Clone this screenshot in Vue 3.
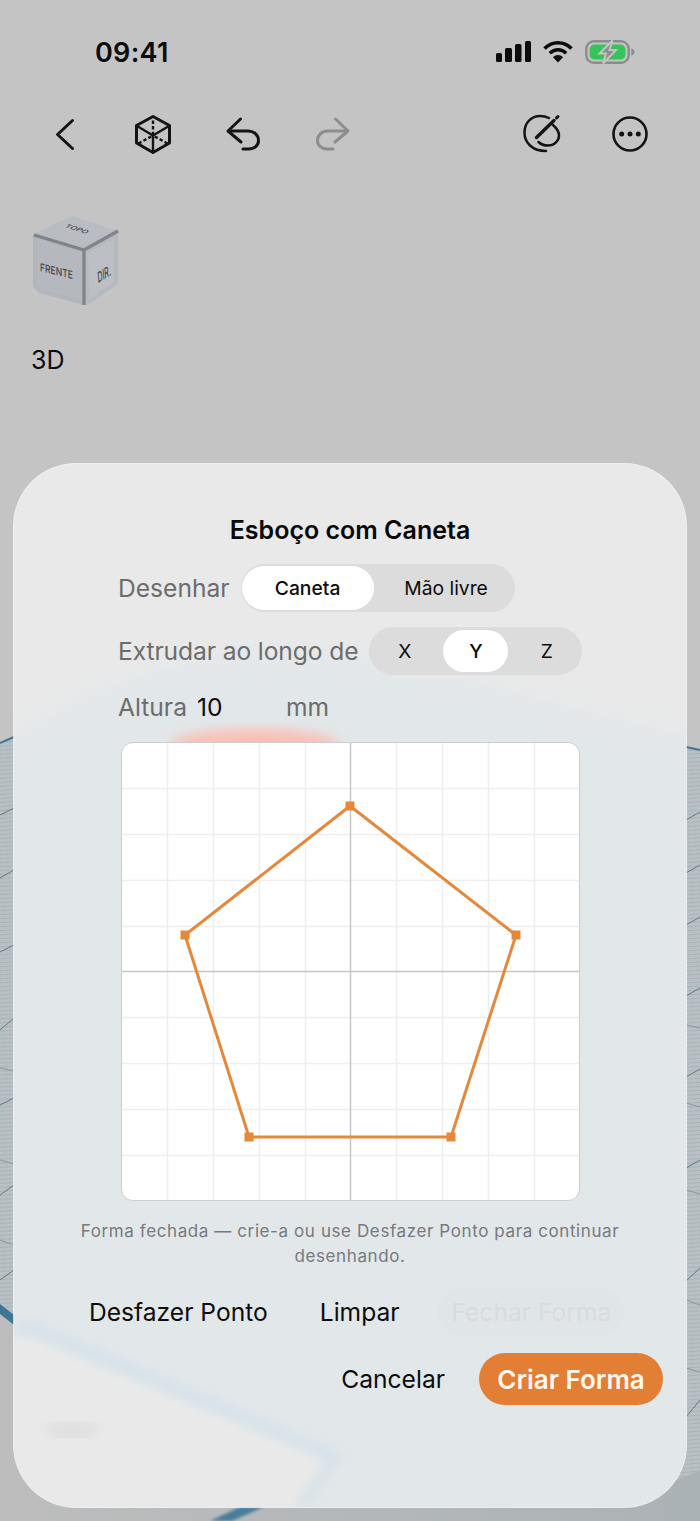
<script setup>
const ticks = [1, 2, 3, 4, 6, 7, 8, 9, 10]
const cell = 45.9
const gridLines = ticks.map((n) => Math.round(n * cell) + 0.5)
const centre = 229.5
const verts = [
  [229, 64],
  [395, 193],
  [330, 395],
  [128, 395],
  [64, 193]
]
const outline = verts.map((p) => p.join(',')).join(' ')
const hatchRise = [
  [686, 820, 700, 812], [686, 873, 700, 865], [686, 925, 700, 917], [686, 996, 700, 988],
  [686, 1077, 700, 1069], [686, 1168, 700, 1160], [686, 1281, 700, 1268], [686, 1417, 700, 1400],
  [0, 815, 14, 808], [0, 878, 14, 870], [0, 952, 14, 945], [0, 1030, 14, 1018],
  [0, 1105, 14, 1098], [0, 1195, 14, 1185], [0, 1280, 14, 1270]
]
const hatchFall = [
  [686, 1025, 700, 1028], [686, 1103, 700, 1107], [686, 1190, 700, 1194], [686, 1300, 700, 1305],
  [686, 1368, 700, 1372], [0, 1068, 14, 1071], [0, 1160, 14, 1164], [0, 1240, 14, 1245]
]
</script>

<template>
  <div class="screen">
    <svg class="scene" viewBox="0 0 700 1521" aria-hidden="true">
      <defs>
        <pattern id="hatch" width="8" height="4" patternUnits="userSpaceOnUse" patternTransform="rotate(-4)">
          <rect width="8" height="4" fill="#b9c1c5" />
          <path d="M0 .5H8" stroke="#a0acb3" stroke-width=".7" />
          <path d="M4 0V4" stroke="#aeb8bd" stroke-width=".5" />
        </pattern>
        <linearGradient id="floor" x1="0" y1="0" x2="1" y2="0">
          <stop offset="0" stop-color="#bdbdbd" />
          <stop offset="1" stop-color="#abb2b6" />
        </linearGradient>
        <filter id="soft"><feGaussianBlur stdDeviation="1.6" /></filter>
      </defs>
      <polygon points="0,743 14,737 350,690 686,747 700,750 700,1470 670,1483 230,1507 14,1323 0,1312" fill="url(#hatch)" />
      <polygon points="670,1483 700,1470 700,1521 0,1521 0,1312 14,1323 230,1507" fill="url(#floor)" />
      <path d="M0 743 14 737M686 747 700 750" stroke="#3f7495" stroke-width="2" />
      <path d="M0 1304 14 1315V1325L0 1314Z" fill="#3f7495" />
      <polygon points="210,1521 240,1507 264,1507 232,1521" fill="#4a7d9c" filter="url(#soft)" />
      <line v-for="(l, i) in hatchRise" :key="'r' + i" :x1="l[0]" :y1="l[1]" :x2="l[2]" :y2="l[3]" stroke="#5f7a88" stroke-width="1" />
      <line v-for="(l, i) in hatchFall" :key="'f' + i" :x1="l[0]" :y1="l[1]" :x2="l[2]" :y2="l[3]" stroke="#7a8f9b" stroke-width=".8" />
    </svg>

    <header class="status">
      <span class="time">09:41</span>
      <div class="status-icons">
        <svg width="36" height="24" viewBox="0 0 36 24">
          <rect x="1" y="13" width="6" height="9" rx="1.6" fill="#0b0b0b" />
          <rect x="10" y="8" width="7" height="14" rx="1.6" fill="#0b0b0b" />
          <rect x="20" y="4" width="6.5" height="18" rx="1.6" fill="#0b0b0b" />
          <rect x="30" y="1" width="6" height="21" rx="1.6" fill="#0b0b0b" />
        </svg>
        <svg width="32" height="24" viewBox="0 0 32 24">
          <path d="M2.5 8.5C10.5 .8 21.5 .8 29.5 8.5" fill="none" stroke="#0b0b0b" stroke-width="3.6" />
          <path d="M7.8 13.3C12.7 8.6 19.3 8.6 24.2 13.3" fill="none" stroke="#0b0b0b" stroke-width="3.4" />
          <path d="M11 17.2 16 22.5 21 17.2C18 14.4 14 14.4 11 17.2Z" fill="#0b0b0b" />
        </svg>
        <svg width="50" height="24" viewBox="0 0 50 24">
          <rect x="1.3" y="1.3" width="42.4" height="21.4" rx="7.5" fill="none" stroke="#8b8c8c" stroke-width="2.4" />
          <rect x="4.6" y="4.6" width="35.8" height="14.8" rx="4.5" fill="#36c45a" />
          <path d="M46.3 8.5C48.4 9 49.4 10.4 49.4 12S48.4 15 46.3 15.5Z" fill="#8b8c8c" />
          <path d="M27.5 .5 14.5 13.5H21L18 23.5 31 10H24.5Z" fill="#8b8c8c" stroke="#c4c4c4" stroke-width="2" />
        </svg>
      </div>
    </header>

    <nav class="toolbar">
      <div class="tool-group">
        <button class="tool" type="button" aria-label="Voltar">
          <svg width="44" height="44" viewBox="43 112 44 44">
            <path d="M72.5 120.5 57.5 134.5 72.5 148.5" class="ink" stroke-width="3" />
          </svg>
        </button>
        <button class="tool" type="button" aria-label="Vista">
          <svg width="44" height="44" viewBox="132 112 44 44">
            <path d="M153 116.500 169.500 125.500V143L153 152.500 136.500 143V125.500Z" class="ink" stroke-width="3" />
            <path d="M137 126 153 135.500 169 126M153 135.500V152" class="ink" stroke-width="2.400" />
            <path d="M153 120.500V134M138.500 143.500 153 135.500M167.500 143.500 153 135.500" class="ink dash" stroke-width="2.400" />
          </svg>
        </button>
        <button class="tool" type="button" aria-label="Desfazer">
          <svg width="44" height="44" viewBox="221 112 44 44">
            <path d="M240.5 119 228 131 241 142" class="ink" stroke-width="3" />
            <path d="M228.5 131H248C254.5 131 258.5 135.5 258.5 140.5S254.5 149 248.5 149H243" class="ink" stroke-width="3" />
          </svg>
        </button>
        <button class="tool" type="button" aria-label="Refazer">
          <svg width="44" height="44" viewBox="310 112 44 44">
            <path d="M335.5 119 348 131 335 142" class="ink muted" stroke-width="3" />
            <path d="M347.5 131H328C321.5 131 317.5 135.5 317.5 140.5S321.5 149 327.5 149H333" class="ink muted" stroke-width="3" />
          </svg>
        </button>
      </div>
      <div class="tool-group">
        <button class="tool" type="button" aria-label="Caneta">
          <svg width="44" height="44" viewBox="518 112 44 44">
            <path d="M545 151C531 151 523.5 142.500 523.500 132.500C523.500 122 531 116 539 116C542.500 116 545.500 116.700 548 118" class="ink" stroke-width="2.500" />
            <path d="M552 125C556 128.500 558 132 558 135.500C558 141 553 145.500 547 145.500C543 145.500 540 144.500 537.500 142" class="ink" stroke-width="2.500" />
            <path d="M535.500 137.500 553 120.500" class="ink" stroke-width="3.400" />
            <path d="M555.500 118 557 116.500" class="ink" stroke-width="3" />
          </svg>
        </button>
        <button class="tool" type="button" aria-label="Mais">
          <svg width="44" height="44" viewBox="608 112 44 44">
            <circle cx="630" cy="134" r="16.500" class="ink" stroke-width="2.600" />
            <circle cx="621.700" cy="134" r="2.500" fill="#111" />
            <circle cx="630" cy="134" r="2.500" fill="#111" />
            <circle cx="638.300" cy="134" r="2.500" fill="#111" />
          </svg>
        </button>
      </div>
    </nav>

    <svg class="view-cube" width="96" height="100" viewBox="28 212 96 100">
      <path d="M36 236 73 219 115 233 84 250Z" fill="#b9bcc2" stroke="#b9bcc2" stroke-width="6" stroke-linejoin="round" />
      <path d="M35 236 84 251V303L40 291 35 286Z" fill="#b5b8bf" stroke="#b2b5bb" stroke-width="4" stroke-linejoin="round" />
      <path d="M86 252 116 235V283L87 303Z" fill="#bcbfc5" stroke="#b6b9be" stroke-width="4" stroke-linejoin="round" />
      <path d="M34 235 84 250 118 231M84 250V305" fill="none" stroke="#808387" stroke-width="3.200" />
      <text class="cube-label" transform="matrix(.72 .22 -.5 .38 64 227)">TOPO</text>
      <text class="cube-label" transform="matrix(.78 .19 0 1 40 271)">FRENTE</text>
      <text class="cube-label" transform="matrix(.62 -.38 .12 1.300 98 283)">DIR.</text>
    </svg>
    <div class="mode">3D</div>

    <section class="sheet">
      <svg class="sheet-glass" viewBox="14 464 672 1043" aria-hidden="true">
        <defs>
          <filter id="blurBig" x="-20%" y="-20%" width="140%" height="140%"><feGaussianBlur stdDeviation="14" /></filter>
          <filter id="blurMid" x="-20%" y="-20%" width="140%" height="140%"><feGaussianBlur stdDeviation="6" /></filter>
        </defs>
        <path d="M0 742 100 690C180 655 300 640 400 665 500 685 600 718 720 742V1540H0Z" fill="#e2e7ea" filter="url(#blurBig)" />
        <ellipse cx="255" cy="746" rx="85" ry="17" fill="#fbbfb4" filter="url(#blurMid)" />
        <path d="M0 1340 25 1335 345 1460 298 1520H0Z" fill="#e9e9e9" filter="url(#blurMid)" />
        <path d="M16 1330 32 1328 336 1458 300 1507" fill="none" stroke="#d0e0e9" stroke-width="9" filter="url(#blurMid)" />
        <ellipse cx="72" cy="1430" rx="28" ry="6" fill="#dcdcdc" filter="url(#blurMid)" />
      </svg>

      <h2 class="title">Esboço com Caneta</h2>

      <div class="row">
        <span class="label">Desenhar</span>
        <div class="segmented pen">
          <button class="seg wide on" type="button">Caneta</button>
          <button class="seg wide" type="button">Mão livre</button>
        </div>
      </div>

      <div class="row row-axis">
        <span class="label">Extrudar ao longo de</span>
        <div class="segmented axis">
          <button class="seg" type="button">X</button>
          <button class="seg on" type="button">Y</button>
          <button class="seg" type="button">Z</button>
        </div>
      </div>

      <div class="row row-height">
        <span class="label">Altura</span>
        <span class="value">10</span>
        <span class="label unit">mm</span>
      </div>

      <div class="canvas">
        <svg width="457" height="457" viewBox="1 1 457 457">
          <g stroke="#eeeef0" stroke-width="1.500">
            <line v-for="v in gridLines" :key="'v' + v" :x1="v" y1="0" :x2="v" y2="459" />
            <line v-for="h in gridLines" :key="'h' + h" x1="0" :y1="h" x2="459" :y2="h" />
          </g>
          <g stroke="#c6c6c8" stroke-width="1.500">
            <line :x1="centre" y1="0" :x2="centre" y2="459" />
            <line x1="0" :y1="centre" x2="459" :y2="centre" />
          </g>
          <polygon :points="outline" fill="none" stroke="#e5883a" stroke-width="3" />
          <rect v-for="p in verts" :key="p.join('-')" :x="p[0] - 4.500" :y="p[1] - 4.500" width="9" height="9" fill="#e5883a" />
        </svg>
      </div>

      <p class="hint">Forma fechada — crie-a ou use Desfazer Ponto para continuar desenhando.</p>

      <div class="edit-actions">
        <button class="text-btn" type="button">Desfazer Ponto</button>
        <button class="text-btn" type="button">Limpar</button>
        <button class="text-btn disabled" type="button">Fechar Forma</button>
      </div>

      <div class="main-actions">
        <button class="text-btn" type="button">Cancelar</button>
        <button class="primary" type="button">Criar Forma</button>
      </div>
    </section>
  </div>
</template>

<style scoped>
.screen {
  position: relative;
  width: 700px;
  height: 1521px;
  overflow: hidden;
  background: #c4c4c4;
  font-family: Inter, "Liberation Sans", sans-serif;
  color: #0c0c0c;
}
button {
  font-family: inherit;
  border: 0;
  background: none;
  color: inherit;
  padding: 0;
}
.scene {
  position: absolute;
  inset: 0;
  width: 700px;
  height: 1521px;
}
.status {
  position: relative;
  height: 104px;
  padding: 0 65px 0 95px;
  display: flex;
  align-items: center;
  justify-content: space-between;
}
.time {
  font-size: 27px;
  font-weight: 600;
  letter-spacing: 0.3px;
}
.status-icons {
  display: flex;
  align-items: center;
  gap: 11px;
}
.status-icons svg {
  display: block;
}
.toolbar {
  position: relative;
  margin-top: 8px;
  height: 44px;
  padding: 0 48px 0 43px;
  display: flex;
  justify-content: space-between;
}
.tool-group {
  display: flex;
  gap: 45px;
}
.tool {
  width: 44px;
  height: 44px;
}
.tool svg {
  display: block;
}
.ink {
  fill: none;
  stroke: #141414;
  stroke-linecap: round;
  stroke-linejoin: round;
}
.ink.dash {
  stroke-linecap: butt;
  stroke-dasharray: 3.4 2.2;
}
.ink.muted {
  stroke: #8d8d8d;
}
.view-cube {
  position: relative;
  display: block;
  margin: 56px 0 0 28px;
}
.cube-label {
  font-size: 11px;
  fill: #44474c;
  font-weight: 500;
}
.mode {
  position: relative;
  margin: 31px 0 0 31px;
  font-size: 25px;
  line-height: 34px;
}
.sheet {
  position: absolute;
  left: 14px;
  top: 464px;
  width: 672px;
  height: 1043px;
  box-sizing: border-box;
  padding-top: 50px;
  border-radius: 62px;
  overflow: hidden;
  background: #e9e9e9;
  box-shadow: 0 0 0 1px rgba(255, 255, 255, 0.75);
}
.sheet-glass {
  position: absolute;
  inset: 0;
  width: 672px;
  height: 1043px;
}
.title,
.row,
.canvas,
.hint,
.edit-actions,
.main-actions {
  position: relative;
}
.title {
  margin: 0;
  text-align: center;
  font-size: 25px;
  line-height: 32px;
  font-weight: 600;
  color: #080808;
}
.row {
  display: flex;
  align-items: center;
  gap: 11px;
  padding-left: 104px;
  margin-top: 18px;
  height: 48px;
}
.row-axis {
  margin-top: 15px;
}
.row-axis .label {
  letter-spacing: -0.1px;
}
.row-height {
  margin-top: 16px;
  height: 32px;
}
.label {
  font-size: 24.6px;
  color: #6c6c6c;
  white-space: nowrap;
}
.value {
  font-size: 24.6px;
  width: 89px;
  margin-left: -1px;
}
.unit {
  margin-left: -11px;
}
.segmented {
  display: flex;
  align-items: stretch;
  gap: 6px;
  box-sizing: border-box;
  height: 48px;
  padding: 3px;
  border-radius: 24px;
  background: #dcdcdc;
}
.segmented.pen {
  width: 274px;
  gap: 0;
  padding: 2px 0 2px 1px;
}
.seg {
  width: 65px;
  border-radius: 22px;
  font-size: 19.3px;
  white-space: nowrap;
}
.seg.wide {
  flex: 1 1 0;
  width: auto;
  padding-left: 4px;
}
.seg.wide.on {
  flex: 0 0 132px;
  padding-left: 0;
}
.seg.on {
  background: #fff;
  font-weight: 500;
}
.canvas {
  margin: 19px 0 0 107px;
  width: 459px;
  height: 459px;
  box-sizing: border-box;
  border: 1px solid #cbcdcf;
  border-radius: 12px;
  overflow: hidden;
  background: #fff;
}
.canvas svg {
  display: block;
}
.hint {
  margin: 18px auto 0;
  width: 560px;
  text-align: center;
  font-size: 17px;
  line-height: 25px;
  letter-spacing: 0.6px;
  color: #777a7c;
}
.edit-actions {
  margin-top: 19px;
  padding-left: 61px;
  display: flex;
  gap: 24px;
}
.text-btn {
  height: 48px;
  padding: 0 14px;
  border-radius: 24px;
  font-size: 24.6px;
  white-space: nowrap;
}
.text-btn.disabled {
  color: #d8dcde;
  background: rgba(0, 0, 0, 0.008);
}
.main-actions {
  margin-top: 17px;
  padding-right: 23px;
  display: flex;
  justify-content: flex-end;
  align-items: center;
  gap: 20px;
}
.primary {
  width: 184px;
  height: 52px;
  border-radius: 26px;
  background: #e27f34;
  color: #fff8ef;
  font-size: 26px;
  font-weight: 600;
}
</style>
